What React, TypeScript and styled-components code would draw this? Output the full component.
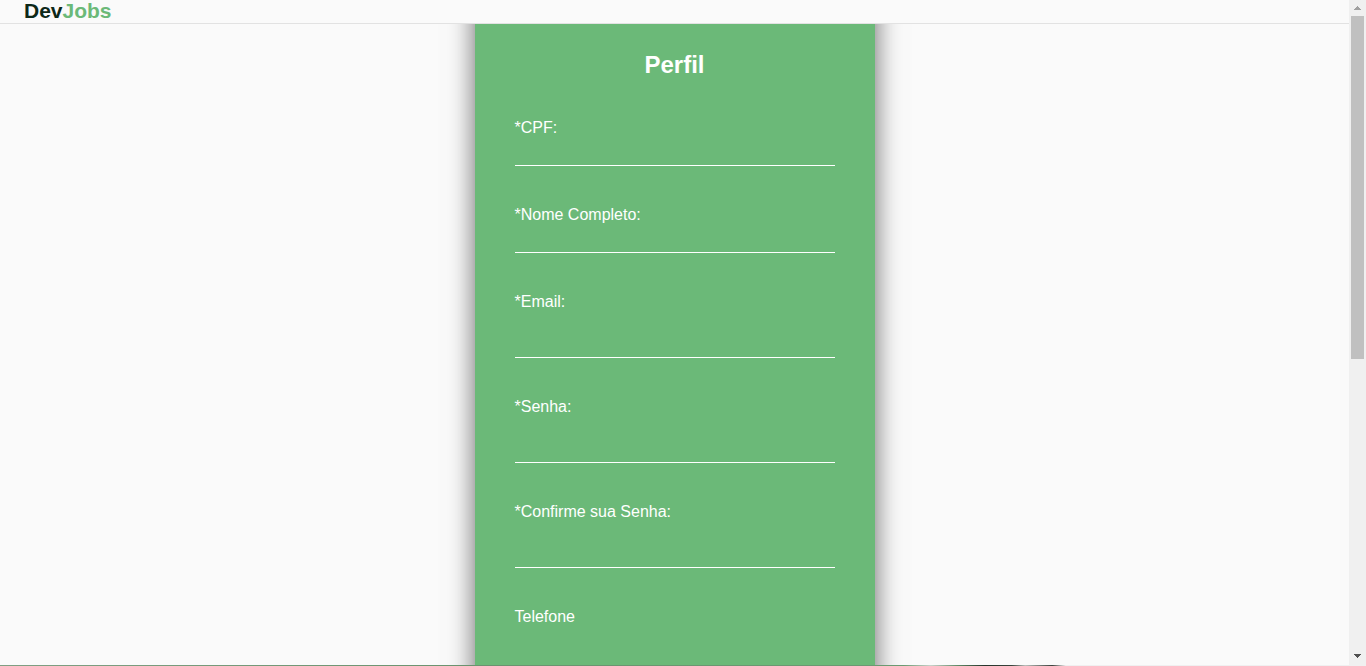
import React from "react";
import styled, { createGlobalStyle } from "styled-components";

const GlobalStyle = createGlobalStyle`
  * { box-sizing: border-box; }
  body {
    margin: 0;
    background: #fafafa;
    font-family: "Liberation Sans", Arial, sans-serif;
    font-size: 16px;
  }
`;

const Window = styled.div`
  display: grid;
  grid-template-columns: minmax(0, 1fr) 17px;
  height: 100vh;
  overflow: hidden;
`;

const Page = styled.div`
  display: flex;
  flex-direction: column;
  min-height: 0;
  overflow: hidden;
`;

const Header = styled.header`
  position: relative;
  z-index: 1;
  flex: none;
  height: 24px;
  padding: 0 24px;
  background: #fafafa;
  border-bottom: 1px solid #e2e2e2;
`;

const Logo = styled.a`
  display: inline-block;
  color: #0d2818;
  font-size: 21px;
  font-weight: bold;
  line-height: 22px;
  text-decoration: none;
`;

const LogoAccent = styled.span`
  color: #6bb978;
`;

const Main = styled.main`
  flex: 1;
  min-height: 0;
  display: flex;
  justify-content: center;
`;

const ProfileForm = styled.form`
  width: 400px;
  max-width: 100%;
  margin: -40px 0;
  padding: 64px 40px;
  background: #6bb978;
  box-shadow: 0 0 25px rgba(0, 0, 0, 0.6);
  color: #fff;
`;

const Title = styled.h1`
  margin: 0 0 36px;
  font-size: 24px;
  line-height: 34px;
  text-align: center;
`;

const Field = styled.div`
  display: flex;
  flex-direction: column;
  margin-bottom: 39px;
`;

const Label = styled.label`
  line-height: 20px;
`;

const Input = styled.input<{ $tall?: boolean }>`
  width: 100%;
  height: ${({ $tall }) => ($tall ? 46 : 28)}px;
  padding: 0;
  border: 0;
  border-bottom: 1px solid #fff;
  border-radius: 0;
  outline: 0;
  background: transparent;
  color: inherit;
  font: inherit;
`;

const Footer = styled.footer`
  position: relative;
  flex: none;
  height: 1px;
  background: linear-gradient(
    90deg,
    #7f9f83 0,
    #6a936f 35%,
    #6b9a72 67%,
    #c8d2ca 69%,
    #5f8a66 71%,
    #26332a 73%,
    #39443c 75%,
    #b9beba 76%,
    #3c423d 78%,
    #f0f0f0 79%
  );
`;

const Scrollbar = styled.div`
  display: flex;
  flex-direction: column;
  padding: 0 2px 2px;
  background: #f0f0f0;
`;

const ScrollButton = styled.button`
  display: flex;
  flex: none;
  align-items: center;
  justify-content: center;
  height: 16px;
  padding: 0;
  border: 0;
  background: transparent;
`;

const Track = styled.div`
  flex: 1;
`;

const Thumb = styled.div`
  width: 13px;
  height: 54.3%;
  background: #c0c0c0;
`;

const fields = [
  { id: "cpf", label: "*CPF:", type: "text", tall: false },
  { id: "nome", label: "*Nome Completo:", type: "text", tall: false },
  { id: "email", label: "*Email:", type: "email", tall: true },
  { id: "senha", label: "*Senha:", type: "password", tall: true },
  { id: "confirma", label: "*Confirme sua Senha:", type: "password", tall: true },
  { id: "telefone", label: "Telefone", type: "tel", tall: true },
];

export default function App() {
  return (
    <Window>
      <GlobalStyle />
      <Page>
        <Header>
          <Logo href="#">
            Dev<LogoAccent>Jobs</LogoAccent>
          </Logo>
        </Header>
        <Main>
          <ProfileForm>
            <Title>Perfil</Title>
            {fields.map((field) => (
              <Field key={field.id}>
                <Label htmlFor={field.id}>{field.label}</Label>
                <Input id={field.id} type={field.type} $tall={field.tall} />
              </Field>
            ))}
          </ProfileForm>
        </Main>
        <Footer />
      </Page>
      <Scrollbar>
        <ScrollButton type="button" aria-label="Rolar para cima">
          <svg width="7" height="4" viewBox="0 0 7 4" shapeRendering="crispEdges">
            <path d="M3 0h1v1h1v1h1v1h1v1H0V3h1V2h1V1h1z" fill="#a0a0a0" />
          </svg>
        </ScrollButton>
        <Track>
          <Thumb />
        </Track>
        <ScrollButton type="button" aria-label="Rolar para baixo">
          <svg width="7" height="4" viewBox="0 0 7 4" shapeRendering="crispEdges">
            <path d="M0 0h7v1H6v1H5v1H4v1H3V3H2V2H1V1H0z" fill="#505050" />
          </svg>
        </ScrollButton>
      </Scrollbar>
    </Window>
  );
}
